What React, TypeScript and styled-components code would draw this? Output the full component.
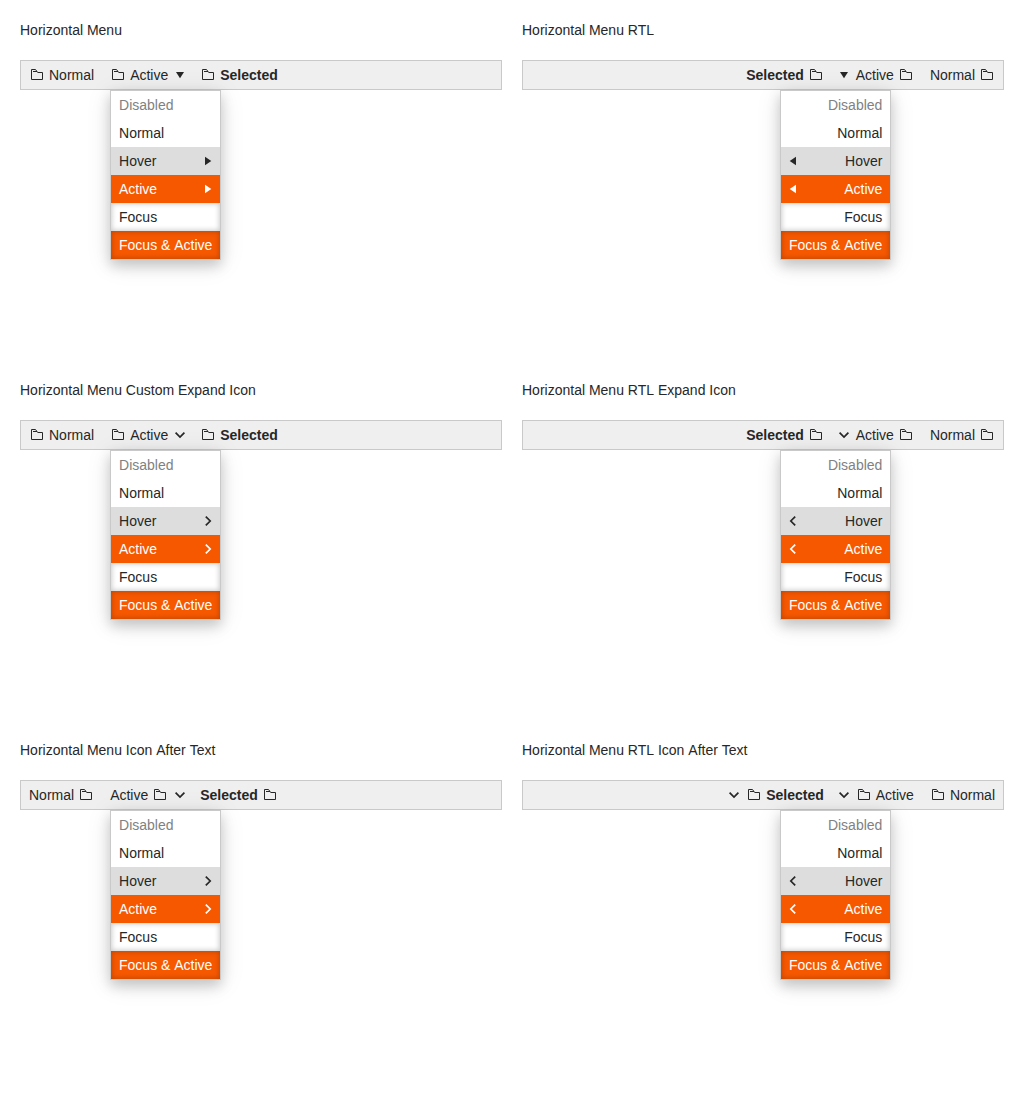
import React, { Fragment } from "react";
import styled, { createGlobalStyle, css } from "styled-components";

const GlobalStyle = createGlobalStyle`
  body {
    margin: 0;
    background: #ffffff;
    color: #272727;
    font-family: "Liberation Sans", Arial, sans-serif;
    font-size: 14px;
    line-height: 20px;
    font-kerning: none;
  }
`;

const Page = styled.main`
  display: grid;
  grid-template-columns: 1fr 1fr;
  grid-auto-rows: 360px;
  column-gap: 20px;
  box-sizing: border-box;
  width: 1024px;
  height: 1100px;
  padding: 20px;
`;

const Example = styled.section`
  display: flex;
  flex-direction: column;
  gap: 20px;
`;

const Title = styled.div`
  height: 20px;
`;

const Word = styled.span`
  font-kerning: normal;
`;

const Bar = styled.nav`
  display: flex;
  box-sizing: border-box;
  height: 30px;
  border: 1px solid #c9c9c9;
  background: #efefef;
`;

const BarItem = styled.div<{ $expandable?: boolean; $selected?: boolean }>`
  position: relative;
  display: flex;
  align-items: center;
  gap: 4px;
  padding-inline: 8px ${(p) => (p.$expandable ? "4px" : "8px")};
  font-weight: ${(p) => (p.$selected ? "bold" : "normal")};
  white-space: nowrap;
`;

const Popup = styled.div<{ $rtl: boolean }>`
  position: absolute;
  top: 29px;
  ${(p) => (p.$rtl ? "right: 30.5px;" : "left: 7.9px;")}
  z-index: 1;
  display: flex;
  flex-direction: column;
  border: 1px solid #c9c9c9;
  background: #ffffff;
  box-shadow: 0 6px 12px rgba(0, 0, 0, 0.18), 0 4px 24px rgba(0, 0, 0, 0.1);
  font-weight: normal;
`;

type State = "disabled" | "normal" | "hover" | "active" | "focus" | "focusActive";

const stateStyles = {
  disabled: css`
    color: #818181;
  `,
  normal: css``,
  hover: css`
    background: #dddddd;
  `,
  active: css`
    background: #f65800;
    color: #ffffff;
  `,
  focus: css`
    box-shadow: inset 0 0 5px 1px rgba(0, 0, 0, 0.2);
  `,
  focusActive: css`
    background: #f65800;
    color: #ffffff;
    box-shadow: inset 0 0 5px 1px rgba(0, 0, 0, 0.2);
  `,
};

const Row = styled.div<{ $state: State; $expandable: boolean }>`
  display: flex;
  align-items: center;
  justify-content: space-between;
  height: 28px;
  padding-inline: 8px ${(p) => (p.$expandable ? "4px" : "8px")};
  ${(p) => stateStyles[p.$state]}
`;

const Glyph = styled.svg`
  flex: none;
  width: 16px;
  height: 16px;
`;

const Folder = () => (
  <Glyph viewBox="0 0 16 16" fill="none" stroke="currentColor" strokeWidth="1">
    <path d="M2.5 12.5v-10h4l2.2 3h4.8v7z" />
    <path d="M4 4.5h4" />
  </Glyph>
);

type Direction = "down" | "right" | "left";

const triangles = {
  down: "M4 5h8l-4 6.3z",
  right: "M5 3.8L11.3 8 5 12.2z",
  left: "M11 3.8L4.7 8l6.3 4.2z",
};

const chevrons = {
  down: "M3.6 5.7L8 10.1l4.4-4.4",
  right: "M5.8 3.6L10.2 8l-4.4 4.4",
  left: "M10.2 3.6L5.8 8l4.4 4.4",
};

const Arrow = ({ direction, chevron }: { direction: Direction; chevron: boolean }) => (
  <Glyph viewBox="0 0 16 16">
    {chevron ? (
      <path d={chevrons[direction]} fill="none" stroke="currentColor" strokeWidth="1.7" />
    ) : (
      <path d={triangles[direction]} fill="currentColor" />
    )}
  </Glyph>
);

const rows: { label: string; state: State; expandable?: boolean }[] = [
  { label: "Disabled", state: "disabled" },
  { label: "Normal", state: "normal" },
  { label: "Hover", state: "hover", expandable: true },
  { label: "Active", state: "active", expandable: true },
  { label: "Focus", state: "focus" },
  { label: "Focus & Active", state: "focusActive" },
];

interface MenuProps {
  title: string;
  rtl?: boolean;
  chevron?: boolean;
  iconAfter?: boolean;
  selectedExpandable?: boolean;
}

const Label = ({ text, iconAfter }: { text: string; iconAfter: boolean }) => (
  <>
    {!iconAfter && <Folder />}
    <span>{text}</span>
    {iconAfter && <Folder />}
  </>
);

const Menu = ({
  title,
  rtl = false,
  chevron = false,
  iconAfter = false,
  selectedExpandable = false,
}: MenuProps) => (
  <Example>
    {/* Kerning applies inside words only, so word gaps keep their full width. */}
    <Title>
      {title.split(" ").map((word, i) => (
        <Fragment key={i}>
          {i > 0 && " "}
          <Word>{word}</Word>
        </Fragment>
      ))}
    </Title>
    <Bar dir={rtl ? "rtl" : "ltr"}>
      <BarItem>
        <Label text="Normal" iconAfter={iconAfter} />
      </BarItem>
      <BarItem $expandable>
        <Label text="Active" iconAfter={iconAfter} />
        <Arrow direction="down" chevron={chevron} />
        <Popup $rtl={rtl}>
          {rows.map((row) => (
            <Row key={row.label} $state={row.state} $expandable={!!row.expandable}>
              <span>{row.label}</span>
              {row.expandable && (
                <Arrow direction={rtl ? "left" : "right"} chevron={chevron} />
              )}
            </Row>
          ))}
        </Popup>
      </BarItem>
      <BarItem $selected $expandable={selectedExpandable}>
        <Label text="Selected" iconAfter={iconAfter} />
        {selectedExpandable && <Arrow direction="down" chevron={chevron} />}
      </BarItem>
    </Bar>
  </Example>
);

export default function App() {
  return (
    <>
      <GlobalStyle />
      <Page>
        <Menu title="Horizontal Menu" />
        <Menu title="Horizontal Menu RTL" rtl />
        <Menu title="Horizontal Menu Custom Expand Icon" chevron />
        <Menu title="Horizontal Menu RTL Expand Icon" rtl chevron />
        <Menu title="Horizontal Menu Icon After Text" chevron iconAfter />
        <Menu title="Horizontal Menu RTL Icon After Text" rtl chevron iconAfter selectedExpandable />
      </Page>
    </>
  );
}
